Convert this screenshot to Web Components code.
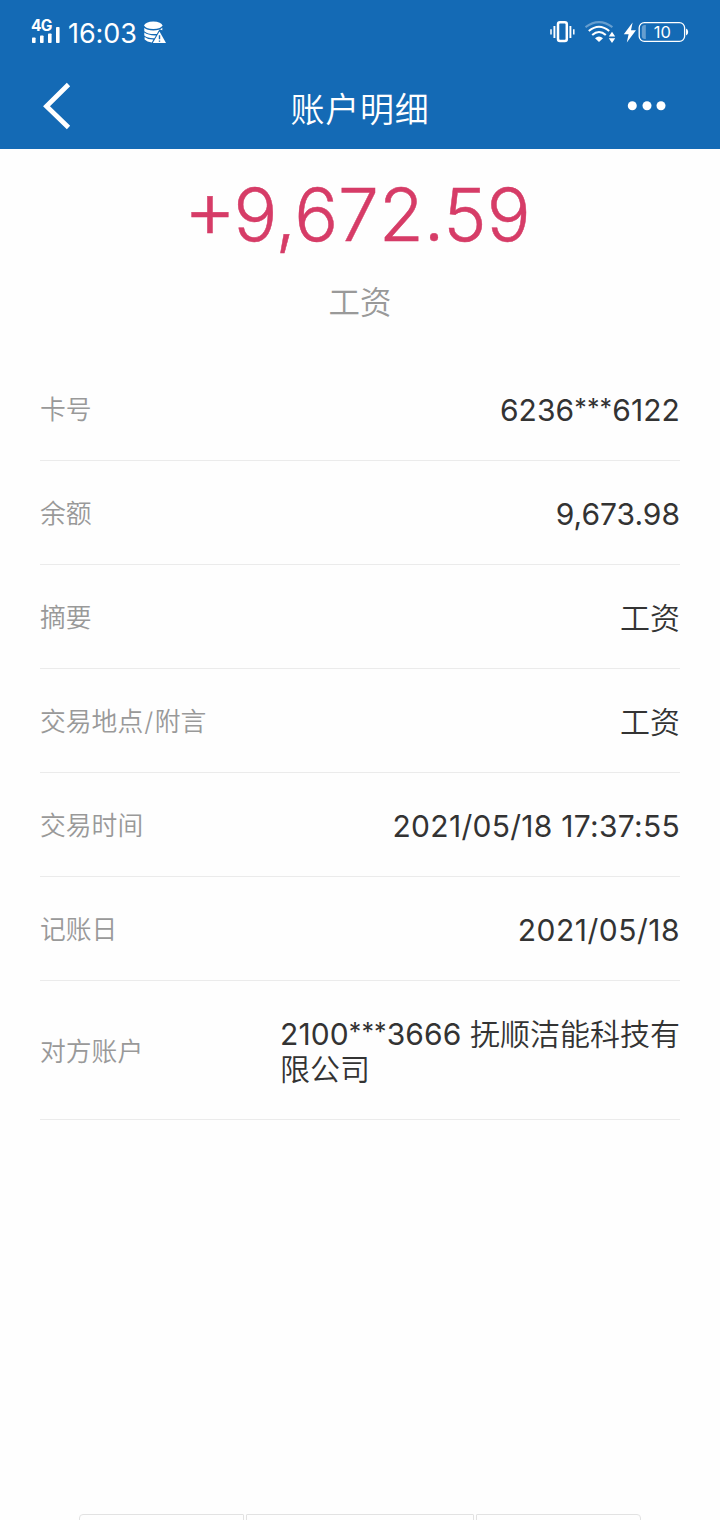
<!DOCTYPE html>
<html lang="zh-CN">
<head>
<meta charset="utf-8">
<meta name="viewport" content="width=device-width">
<title>账户明细</title>
<style>
  html, body { margin: 0; background: #fefefe; }
  body { font-family: Inter, "Noto Sans CJK SC", sans-serif; }
</style>
</head>
<body>
<account-page></account-page>

<script>
(() => {
  // attaches an open shadow root holding the given markup
  const define = (name, html) => {
    const tpl = document.createElement('template');
    tpl.innerHTML = html;
    customElements.define(name, class extends HTMLElement {
      constructor() {
        super();
        this.attachShadow({ mode: 'open' }).append(tpl.content.cloneNode(true));
      }
    });
  };

  define('signal-icon', `
    <style>
      :host { display: block; width: 30px; height: 28px; }
      svg { display: block; }
      text { font: 700 15.5px Inter, sans-serif; letter-spacing: -.8px; }
    </style>
    <svg width="30" height="28" viewBox="0 0 30 28" fill="#fff">
      <text x="0" y="14.5">4G</text>
      <rect x="1" y="21.5" width="3.6" height="5.5" rx=".8"/>
      <rect x="9" y="19.5" width="3.6" height="7.5" rx=".8"/>
      <rect x="17" y="17.5" width="3.6" height="9.5" rx=".8"/>
      <rect x="25" y="11" width="3.6" height="16" rx=".8"/>
    </svg>`);

  define('storage-icon', `
    <style>:host { display: block; } svg { display: block; }</style>
    <svg width="24" height="24" viewBox="0 0 24 24" fill="#fff">
      <ellipse cx="9.3" cy="4.3" rx="9" ry="3.7"/>
      <path d="M.3 6.8Q3 9.5 9.3 9.5T18.3 6.8V9.3L16.8 8.7Q15.5 8.3 14.5 10L12.8 13Q4 13.6 .3 10.2Z"/>
      <path d="M.3 11.6Q4 14.6 12 14.4L10.3 17.3Q3.6 17.5 .3 14.6Z"/>
      <path d="M.6 16Q4 18.8 9.4 18.6L7.8 21.4Q3 21 .6 18.6Z"/>
      <path d="M15.5 10.4 22 22H8.8Z"/>
      <path d="M15.5 14.2v4M15.5 19.4v1.4" stroke="#146ab5" stroke-width="1.4"/>
    </svg>`);

  define('vibrate-icon', `
    <style>:host { display: block; } svg { display: block; }</style>
    <svg width="26" height="24" viewBox="0 0 26 24" fill="none" stroke="#fff">
      <rect x="9" y="2.3" width="8.8" height="18.8" rx="2" stroke-width="2.5"/>
      <path d="M5.4 6v12M21.4 6v12" stroke-width="1.9"/>
      <path d="M2 9.2v5.2M24.8 9.2v5.2" stroke-width="1.5"/>
    </svg>`);

  define('wifi-icon', `
    <style>:host { display: block; } svg { display: block; }</style>
    <svg width="32" height="24" viewBox="0 0 32 24" fill="none" stroke="#fff" stroke-width="2.1">
      <path d="M.5 7.2Q14 -3 27.4 7.2" opacity=".35"/>
      <path d="M3.8 11Q14 2.5 24.2 11"/>
      <path d="M7.2 15Q14 9 20.8 15"/>
      <path d="M10 18.2Q14 14.8 18 18.2L14 22Z" fill="#fff" stroke="none"/>
      <path d="M27 11.8l3.2 4.6h-6.4zM27 22.9l3.2-4.6h-6.4z" fill="#fff" stroke="none"/>
    </svg>`);

  define('battery-icon', `
    <style>
      :host { display: block; }
      svg { display: block; }
      text { font: 400 16.5px Inter, sans-serif; }
    </style>
    <svg width="68" height="24" viewBox="0 0 68 24" fill="#fff">
      <path d="M9.6 2.5 .8 14.2h4.8l-1.8 8.4L13 10.2H8Z"/>
      <rect x="16.2" y="2.6" width="45.4" height="18.8" rx="5.2" fill="none" stroke="#fff" stroke-width="1.3"/>
      <path d="M22.8 5v14h-1q-3 0-3-3V8q0-3 3-3Z" opacity=".35"/>
      <path d="M63 8.5q2.2.5 2.2 3.5t-2.2 3.5Z"/>
      <text x="39.3" y="18" text-anchor="middle">10</text>
    </svg>`);

  define('status-bar', `
    <style>
      :host { display: flex; align-items: flex-start; justify-content: space-between;
              height: 64px; padding: 0 31px; box-sizing: border-box; color: #fff; }
      .side { display: flex; }
      signal-icon { margin-top: 16px; }
      .time { margin: 17px 0 0 7px; width: 76px; font-size: 27px; line-height: 34px;
              letter-spacing: -.1px; white-space: nowrap; }
      storage-icon { margin-top: 21px; }
      .right { margin: 20px -2px 0 0; }
      wifi-icon { margin-left: 10px; }
      battery-icon { margin-left: 6px; }
    </style>
    <div class="side">
      <signal-icon></signal-icon>
      <span class="time">16:03</span>
      <storage-icon></storage-icon>
    </div>
    <div class="side right">
      <vibrate-icon></vibrate-icon>
      <wifi-icon></wifi-icon>
      <battery-icon></battery-icon>
    </div>`);

  define('nav-bar', `
    <style>
      :host { display: grid; grid-template-columns: 80px 1fr 80px; align-items: center;
              height: 85px; padding: 0 14px 0 0; box-sizing: border-box; color: #fff; }
      h1 { margin: 6px 0 0 14px; text-align: center; font-weight: 350; font-size: 34px;
           line-height: 44px; letter-spacing: .8px; }
      svg { display: block; }
    </style>
    <svg width="80" height="85" fill="none" stroke="#fff" stroke-width="4.8">
      <path d="M68.5 20.5 46.5 42.2 68.5 63.5"/>
    </svg>
    <h1><slot></slot></h1>
    <svg width="80" height="85" fill="#fff">
      <circle cx="6.3" cy="41.7" r="4.5"/><circle cx="21" cy="41.7" r="4.5"/><circle cx="35" cy="41.7" r="4.5"/>
    </svg>`);

  define('amount-summary', `
    <style>
      :host { display: flex; flex-direction: column; align-items: center; height: 208px; }
      .amount { display: flex; align-items: center; height: 88px; margin: 22px 6px 0 0; color: #d63c67;
                font-size: 73px; line-height: 88px; font-weight: 300; white-space: nowrap;
                -webkit-text-stroke: .5px #d63c67; }
      ::slotted([slot=sign]) { font-size: 81px; margin: 0 -3px 13px 0; }
      .kind { margin-top: 22px; color: #999; font-size: 31.5px; line-height: 44px; font-weight: 350; }
    </style>
    <div class="amount"><slot name="sign"></slot><slot name="amount"></slot></div>
    <div class="kind"><slot></slot></div>`);

  define('detail-row', `
    <style>
      :host { display: flex; align-items: center; justify-content: space-between;
              padding: 36px 0 32px; border-bottom: 1px solid #ebebeb; line-height: 35px; }
      .label { margin-top: -2px; color: #999; font-size: 25.8px; font-weight: 350; white-space: nowrap; }
      .value { color: #333; font-size: 30px; letter-spacing: var(--track, 0); white-space: nowrap; }
    </style>
    <span class="label"><slot name="label"></slot></span>
    <span class="value"><slot></slot></span>`);

  // top edges of the three bottom buttons, which run on below the window
  define('bottom-actions', `
    <style>
      :host { display: grid; grid-template-columns: 165px 228px 165px; gap: 2px;
              width: 562px; height: 6px; margin: 0 auto; overflow: hidden; }
      i { height: 30px; box-sizing: border-box; border: 1px solid #e2e2e2; border-radius: 1px; }
      i:first-of-type { border-radius: 4px 1px 1px 4px; }
      i:last-of-type { border-radius: 1px 4px 4px 1px; }
    </style>
    <i></i><i></i><i></i>`);

  define('account-page', `
    <style>
      :host { display: flex; flex-direction: column; width: 720px; height: 1520px; overflow: hidden; }
      header { background: #146ab5; }
      main { flex: 1; }
      .rows { padding: 0 40px; }
      .mask { font-size: 25px; line-height: 0; vertical-align: 4px; }
      .han { font-weight: 350; letter-spacing: 0; }
      .slash { padding: 0 1.5px 0 1px; }
      .line { display: block; }
      .card { --track: .1px; }
      .date { --track: .5px; }
      .time { --track: .28px; }
    </style>
    <header>
      <status-bar></status-bar>
      <nav-bar>账户明细</nav-bar>
    </header>
    <main>
      <amount-summary><span slot="sign">+</span><span slot="amount">9,672.59</span>工资</amount-summary>
      <div class="rows">
        <detail-row class="card"><span slot="label">卡号</span>6236<span class="mask">***</span>6122</detail-row>
        <detail-row><span slot="label">余额</span>9,673.98</detail-row>
        <detail-row><span slot="label">摘要</span><span class="han">工资</span></detail-row>
        <detail-row><span slot="label">交易地点<span class="slash">/</span>附言</span><span class="han">工资</span></detail-row>
        <detail-row class="time"><span slot="label">交易时间</span>2021/05/18 17:37:55</detail-row>
        <detail-row class="date"><span slot="label">记账日</span>2021/05/18</detail-row>
        <detail-row class="card"><span slot="label">对方账户</span><span class="line">2100<span class="mask">***</span>3666 <span class="han">抚顺洁能科技有</span></span><span class="line han">限公司</span></detail-row>
      </div>
    </main>
    <bottom-actions></bottom-actions>`);
})();
</script>
</body>
</html>
